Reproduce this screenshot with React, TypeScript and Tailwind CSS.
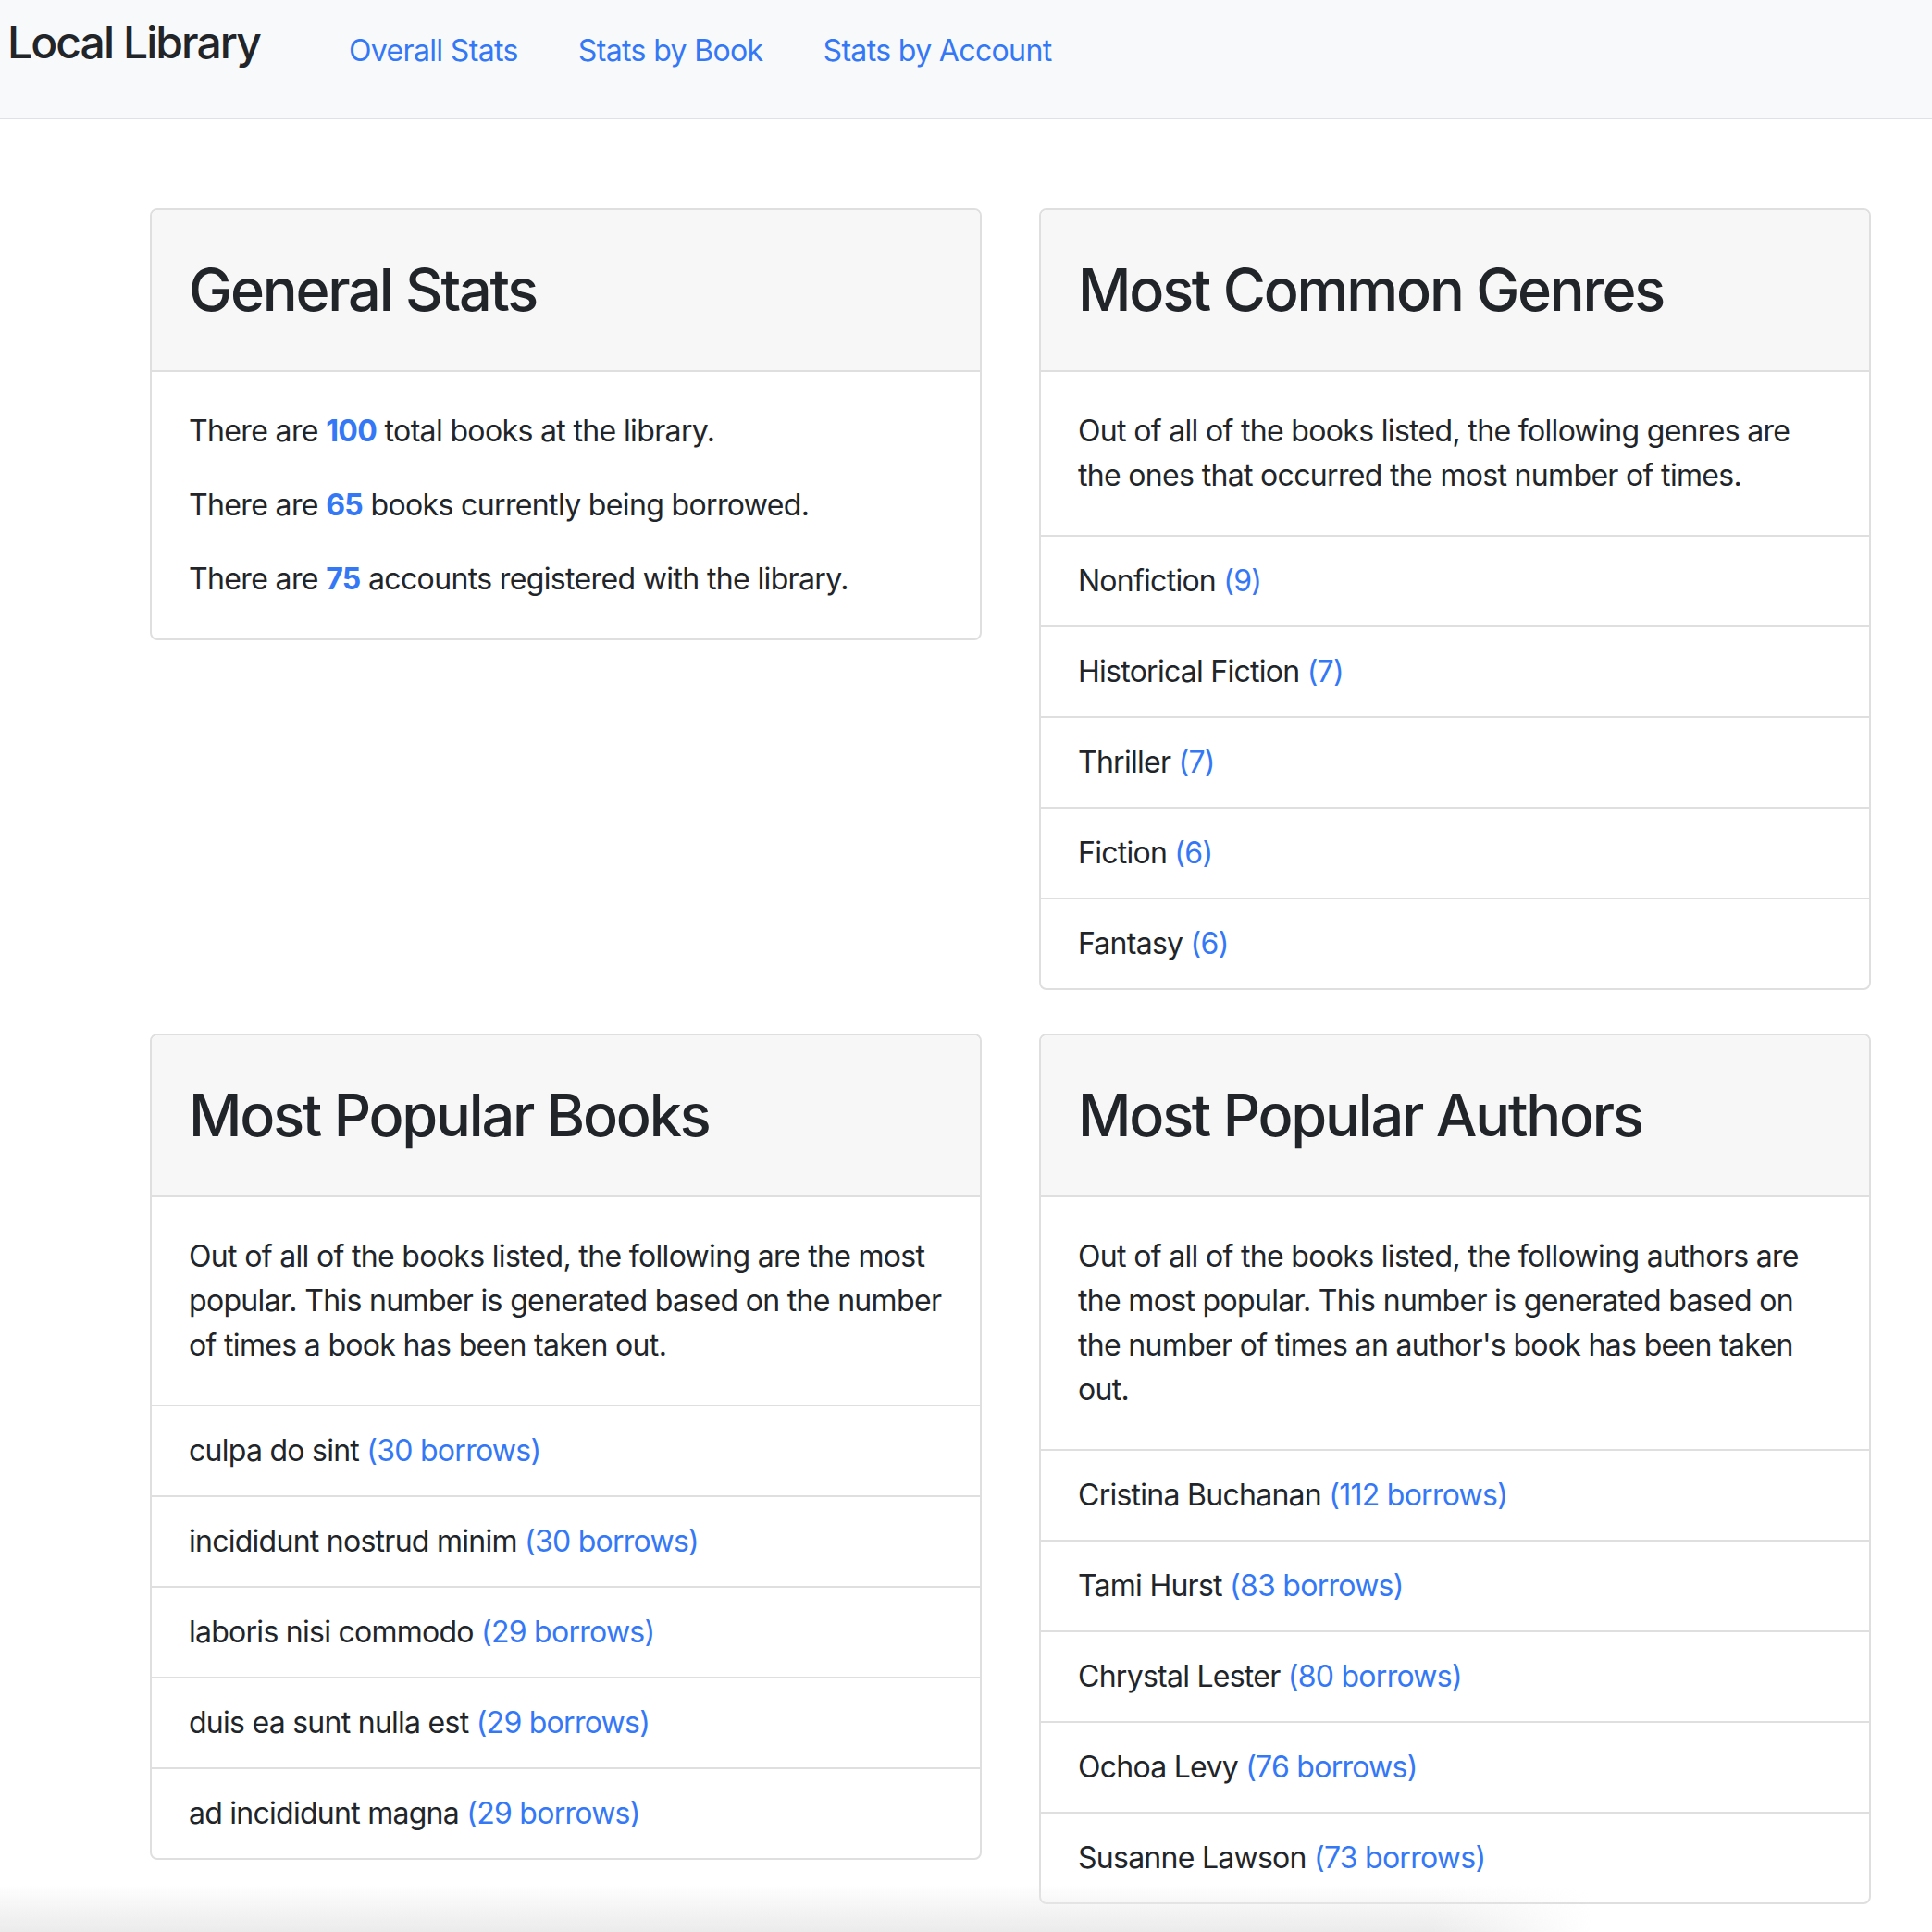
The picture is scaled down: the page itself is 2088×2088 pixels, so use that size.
import React from "react";

const font = { fontFamily: "Inter, 'Noto Sans', sans-serif" };

const genres = [
  { name: "Nonfiction", count: 9 },
  { name: "Historical Fiction", count: 7 },
  { name: "Thriller", count: 7 },
  { name: "Fiction", count: 6 },
  { name: "Fantasy", count: 6 },
];

const books = [
  { name: "culpa do sint", count: 30 },
  { name: "incididunt nostrud minim", count: 30 },
  { name: "laboris nisi commodo", count: 29 },
  { name: "duis ea sunt nulla est", count: 29 },
  { name: "ad incididunt magna", count: 29 },
];

const authors = [
  { name: "Cristina Buchanan", count: 112 },
  { name: "Tami Hurst", count: 83 },
  { name: "Chrystal Lester", count: 80 },
  { name: "Ochoa Levy", count: 76 },
  { name: "Susanne Lawson", count: 73 },
];

const Card = ({ title, children }: { title: string; children: React.ReactNode }) => (
  <div className="border-2 border-[#dfdfdf] rounded-[8px] overflow-hidden bg-white">
    <div className="bg-[#f7f7f7] border-b-2 border-[#dfdfdf] px-[40px] py-[48px]">
      <h2 className="text-[63px] leading-[77px] font-medium tracking-[-0.035em] text-[#212529]">{title}</h2>
    </div>
    {children}
  </div>
);

const Intro = ({ lines }: { lines: string[] }) => (
  <div className="p-[40px]">
    <p className="text-[32px] leading-[48px] text-[#212529] tracking-[-0.021em]">
      {lines.map((l, i) => (
        <span key={i} className="block whitespace-nowrap">
          {l}
        </span>
      ))}
    </p>
  </div>
);

const List = ({ items, suffix }: { items: { name: string; count: number }[]; suffix: string }) => (
  <ul>
    {items.map((it) => (
      <li
        key={it.name}
        className="border-t-2 border-[#dfdfdf] px-[40px] py-[24px] text-[32px] leading-[48px] text-[#212529] tracking-[-0.023em] whitespace-nowrap"
      >
        {it.name} <span className="text-[#3478f6]">({it.count}{suffix})</span>
      </li>
    ))}
  </ul>
);

export default function App() {
  return (
    <div className="relative h-[2088px] overflow-hidden bg-white" style={font}>
      {/* navbar */}
      <nav className="h-[129px] bg-[#f8f9fa] border-b-2 border-[#dee2e6] flex items-start pl-[8px]">
        <span className="mt-[10px] text-[48px] leading-[72px] font-medium tracking-[-0.04em] text-[#212529]">
          Local Library
        </span>
        <div className="flex gap-[65px] ml-[96px] mt-[31px] text-[32px] leading-[48px] tracking-[-0.02em] text-[#3478f6]">
          <a href="#">Overall Stats</a>
          <a href="#">Stats by Book</a>
          <a href="#">Stats by Account</a>
        </div>
      </nav>

      <main className="pl-[162px] pt-[96px]">
        <div className="grid grid-cols-[899px_899px] gap-x-[62px] gap-y-[47px] items-start">
          <Card title="General Stats">
            <div className="p-[40px] text-[32px] leading-[48px] text-[#212529] tracking-[-0.02em] flex flex-col gap-[32px]">
              <p>
                There are <b className="font-bold text-[#3478f6]">100</b> total books at the library.
              </p>
              <p>
                There are <b className="font-bold text-[#3478f6]">65</b> books currently being borrowed.
              </p>
              <p>
                There are <b className="font-bold text-[#3478f6]">75</b> accounts registered with the library.
              </p>
            </div>
          </Card>

          <Card title="Most Common Genres">
            <Intro
              lines={[
                "Out of all of the books listed, the following genres are",
                "the ones that occurred the most number of times.",
              ]}
            />
            <List items={genres} suffix="" />
          </Card>

          <Card title="Most Popular Books">
            <Intro
              lines={[
                "Out of all of the books listed, the following are the most",
                "popular. This number is generated based on the number",
                "of times a book has been taken out.",
              ]}
            />
            <List items={books} suffix=" borrows" />
          </Card>

          <Card title="Most Popular Authors">
            <Intro
              lines={[
                "Out of all of the books listed, the following authors are",
                "the most popular. This number is generated based on",
                "the number of times an author's book has been taken",
                "out.",
              ]}
            />
            <List items={authors} suffix=" borrows" />
          </Card>
        </div>
      </main>

      {/* bottom window shade */}
      <div className="pointer-events-none absolute bottom-0 left-0 w-[1720px] h-[52px] bg-[linear-gradient(to_bottom,rgba(235,235,235,0),rgba(235,235,235,1))] [mask-image:linear-gradient(to_right,black_90%,transparent)]" />
    </div>
  );
}
